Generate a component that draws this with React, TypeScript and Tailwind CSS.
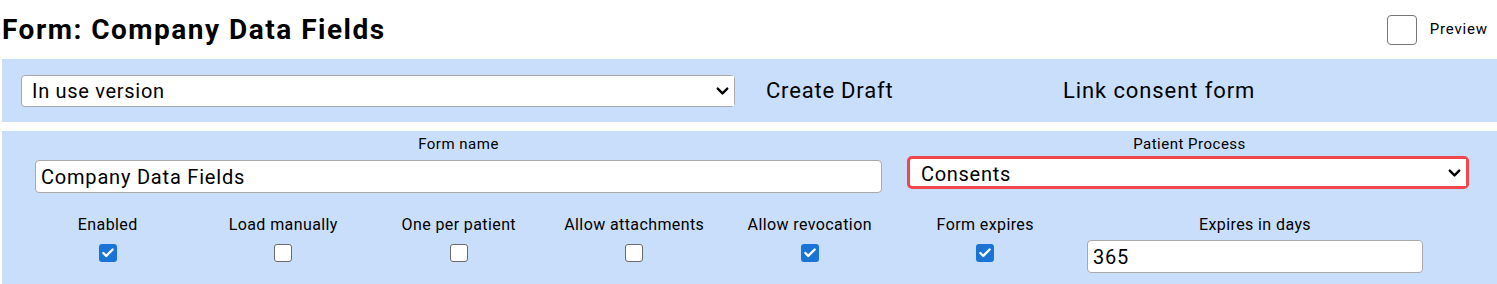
import { ChevronDown, Check } from "lucide-react";

const font = { fontFamily: "Roboto, 'Liberation Sans', sans-serif" };

function Box({ checked }: { checked: boolean }) {
  return checked ? (
    <span className="flex h-[18px] w-[18px] items-center justify-center rounded-[3px] bg-[#1a74d6]">
      <Check className="h-[14px] w-[14px] text-white" strokeWidth={4} />
    </span>
  ) : (
    <span className="block h-[18px] w-[18px] rounded-[3px] border-[1.5px] border-[#6b6b6b] bg-white" />
  );
}

function Select({ value, className }: { value: string; className: string }) {
  return (
    <div className={"relative bg-white " + className}>
      <select
        defaultValue={value}
        className="h-full w-full appearance-none bg-white pr-8 text-[20px] tracking-[0.7px] text-black outline-none"
      >
        <option>{value}</option>
      </select>
      <ChevronDown
        className="pointer-events-none absolute right-[2px] top-1/2 h-[19px] w-[19px] -translate-y-1/2 text-black"
        strokeWidth={3}
      />
    </div>
  );
}

const flags = [
  { label: "Enabled", checked: true },
  { label: "Load manually", checked: false },
  { label: "One per patient", checked: false },
  { label: "Allow attachments", checked: false },
  { label: "Allow revocation", checked: true },
  { label: "Form expires", checked: true },
];

export default function App() {
  return (
    <div className="w-[1497px] bg-white pl-[2px] text-black" style={font}>
      <div className="flex h-[59px] items-center justify-between">
        <h1 className="text-[28px] font-bold leading-[34px] tracking-[1.5px]">Form: Company Data Fields</h1>
        <label className="mr-[9px] flex items-center gap-[13px]">
          <span className="block h-[30px] w-[30px] rounded-[4px] border border-[#767676] bg-white" />
          <span className="text-[15px] tracking-[0.85px]">Preview</span>
        </label>
      </div>

      <div className="flex h-[63px] items-center bg-[#c9defb] pl-[19px]">
        <Select
          value="In use version"
          className="h-[32px] w-[714px] rounded-[4px] border border-[#a9a9a9] pl-[10px]"
        />
        <div className="ml-[31px] w-[297px] text-[22px] tracking-[0.8px]">Create Draft</div>
        <div className="text-[22px] tracking-[0.9px]">Link consent form</div>
      </div>

      <div className="mt-[9px] bg-[#c9defb] pb-[14px] pl-[18px] pt-[4px]">
        <div className="flex">
          <div className="flex w-[877px] flex-col items-center">
            <div className="text-[15px] leading-[18px] tracking-[0.5px]">Form name</div>
            <div className="mt-[7px] w-full px-[15px]">
              <input
                defaultValue="Company Data Fields"
                className="h-[33px] w-full rounded-[4px] border border-[#a9a9a9] bg-white px-[5px] text-[20px] tracking-[0.8px] outline-none"
              />
            </div>
          </div>
          <div className="flex w-[585px] flex-col items-center">
            <div className="text-[15px] leading-[18px] tracking-[0.5px]">Patient Process</div>
            <div className="mt-[3px] w-full pl-[10px] pr-[13px]">
              <Select
                value="Consents"
                className="h-[33px] w-full rounded-[5px] border-[3px] border-[#f0474c] pl-[11px]"
              />
            </div>
          </div>
        </div>

        <div className="mt-[22px] flex">
          {flags.map((f) => (
            <div key={f.label} className="flex w-[175.5px] flex-col items-center">
              <div className="text-[16px] leading-[20px] tracking-[0.4px]">{f.label}</div>
              <div className="mt-[9px]">
                <Box checked={f.checked} />
              </div>
            </div>
          ))}
          <div className="flex w-[364px] flex-col items-center px-[14px]">
            <div className="text-[16px] leading-[20px] tracking-[0.4px]">Expires in days</div>
            <input
              defaultValue="365"
              className="mt-[5px] h-[33px] w-full rounded-[4px] border border-[#a9a9a9] bg-white px-[5px] text-[20px] tracking-[0.7px] outline-none"
            />
          </div>
        </div>
      </div>
    </div>
  );
}
